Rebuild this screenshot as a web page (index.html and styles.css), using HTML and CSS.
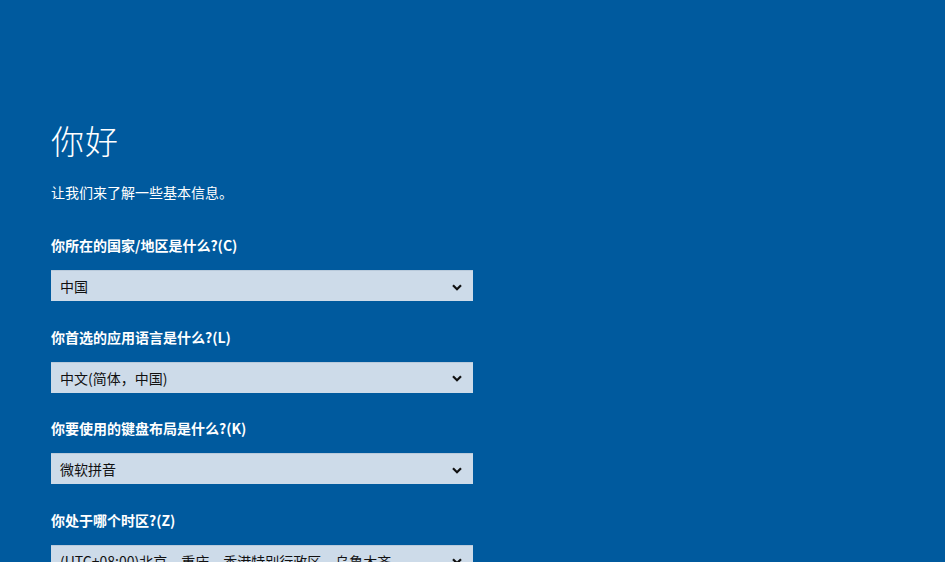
FILE: index.html
```html
<!DOCTYPE html>
<html lang="zh-CN">
<head>
<meta charset="utf-8">
<title>你好</title>
<link rel="stylesheet" href="styles.css">
</head>
<body>
<main class="setup">
  <h1 class="title">你好</h1>
  <p class="intro">让我们来了解一些基本信息。</p>
  <section class="field">
    <div class="label">你所在的国家/地区是什么?(C)</div>
    <div class="select"><span class="value">中国</span><svg class="chev" viewBox="0 0 10 7" width="10" height="7"><path d="M1 1.2 L5 5.2 L9 1.2" fill="none" stroke="#111" stroke-width="2.2"/></svg></div>
  </section>
  <section class="field">
    <div class="label">你首选的应用语言是什么?(L)</div>
    <div class="select"><span class="value">中文(简体，中国)</span><svg class="chev" viewBox="0 0 10 7" width="10" height="7"><path d="M1 1.2 L5 5.2 L9 1.2" fill="none" stroke="#111" stroke-width="2.2"/></svg></div>
  </section>
  <section class="field">
    <div class="label">你要使用的键盘布局是什么?(K)</div>
    <div class="select"><span class="value">微软拼音</span><svg class="chev" viewBox="0 0 10 7" width="10" height="7"><path d="M1 1.2 L5 5.2 L9 1.2" fill="none" stroke="#111" stroke-width="2.2"/></svg></div>
  </section>
  <section class="field">
    <div class="label">你处于哪个时区?(Z)</div>
    <div class="select"><span class="value">(UTC+08:00)北京，重庆，香港特别行政区，乌鲁木齐</span><svg class="chev" viewBox="0 0 10 7" width="10" height="7"><path d="M1 1.2 L5 5.2 L9 1.2" fill="none" stroke="#111" stroke-width="2.2"/></svg></div>
  </section>
</main>
</body>
</html>
```
FILE: styles.css
```css
html, body {
  margin: 0;
  padding: 0;
  height: 100%;
  overflow: hidden;
}
body {
  background: #005a9e;
  color: #ffffff;
  font-family: "Noto Sans CJK SC", "Liberation Sans", sans-serif;
}
.setup {
  padding: 120px 0 0 51px;
  width: 422px;
}
.title {
  margin: 0;
  font-size: 33px;
  line-height: 40px;
  font-weight: 300;
  letter-spacing: 1px;
}
.intro {
  margin: 22px 0 0;
  font-size: 14px;
  line-height: 20px;
}
.field {
  margin-top: 25.5px;
}
.intro + .field {
  margin-top: 33px;
}
.label {
  font-size: 14px;
  line-height: 20px;
  font-weight: 700;
}
.select {
  margin-top: 15px;
  height: 31px;
  box-sizing: border-box;
  background: #cddbe9;
  color: #111;
  display: flex;
  align-items: center;
  justify-content: space-between;
  padding: 0 11px 0 9px;
  font-size: 14px;
  border-top: 1px solid #b9cadb;
}
.value {
  white-space: nowrap;
}
.chev {
  flex: none;
  margin-top: 2px;
}
```
